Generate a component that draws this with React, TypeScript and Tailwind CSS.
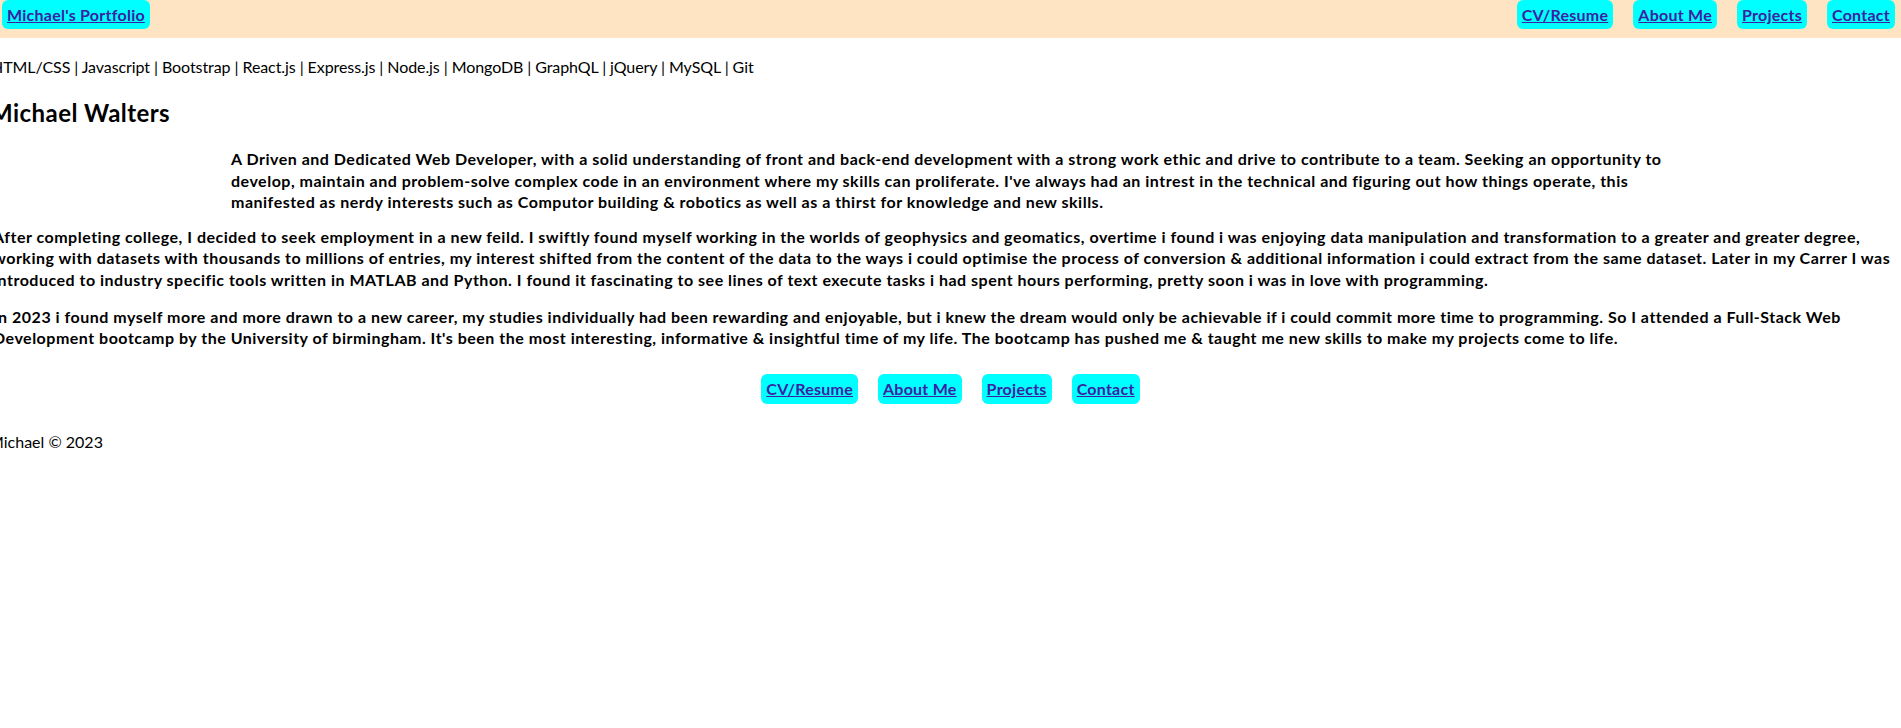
import React from "react";

const navLinks = ["CV/Resume", "About Me", "Projects", "Contact"];

const NavButton = ({ label, tall }: { label: string; tall?: boolean }) => (
    <a
        href="#"
        className={
            "flex items-center rounded-[6px] bg-[#00ffff] px-[5px] font-bold tracking-[0.25px] text-[#3b22a3] underline " +
            (tall ? "h-[30px]" : "h-[29px]")
        }
    >
        {label}
    </a>
);

const App = () => {
    return (
        <div className="w-full min-h-screen overflow-hidden bg-white text-black text-[16px] leading-[21.3px] font-['Lato',sans-serif]">
            {/* Header */}
            <header className="flex h-[38px] items-start justify-between bg-[#ffe4c4] pl-[2px] pr-[6px]">
                <NavButton label="Michael's Portfolio" />
                <nav className="flex gap-[20px]">
                    {navLinks.map((l) => (
                        <NavButton key={l} label={l} />
                    ))}
                </nav>
            </header>

            {/* Skills */}
            <p className="mt-[18px] -ml-[9px] tracking-[-0.08px]">
                HTML/CSS | Javascript | Bootstrap | React.js | Express.js | Node.js | MongoDB | GraphQL | jQuery | MySQL | Git
            </p>

            {/* About */}
            <main className="font-bold tracking-[0.5px]">
                <h2 className="mt-[20px] -ml-[10px] text-[24px] leading-[32px] tracking-[0.45px]">Michael Walters</h2>
                <p className="mt-[19px] ml-[231px] w-[1450px]">
                    A Driven and Dedicated Web Developer, with a solid understanding of front and back-end development with a strong work ethic and drive to contribute to a team. Seeking an opportunity to develop, maintain and problem-solve complex code in an environment where my skills can proliferate. I've always had an intrest in the technical and figuring out how things operate, this manifested as nerdy interests such as Computor building &amp; robotics as well as a thirst for knowledge and new skills.
                </p>
                <p className="mt-[14px] -ml-[7px] w-[1905px]">
                    After completing college, I decided to seek employment in a new feild. I swiftly found myself working in the worlds of geophysics and geomatics, overtime i found i was enjoying data manipulation and transformation to a greater and greater degree, working with datasets with thousands to millions of entries, my interest shifted from the content of the data to the ways i could optimise the process of conversion &amp; additional information i could extract from the same dataset. Later in my Carrer I was introduced to industry specific tools written in MATLAB and Python. I found it fascinating to see lines of text execute tasks i had spent hours performing, pretty soon i was in love with programming.
                </p>
                <p className="mt-[16px] -ml-[7px] w-[1905px]">
                    In 2023 i found myself more and more drawn to a new career, my studies individually had been rewarding and enjoyable, but i knew the dream would only be achievable if i could commit more time to programming. So I attended a Full-Stack Web Development bootcamp by the University of birmingham. It's been the most interesting, informative &amp; insightful time of my life. The bootcamp has pushed me &amp; taught me new skills to make my projects come to life.
                </p>
            </main>

            {/* Footer */}
            <footer>
                <nav className="mt-[25px] flex justify-center gap-[20px]">
                    {navLinks.map((l) => (
                        <NavButton key={l} label={l} tall />
                    ))}
                </nav>
                <p className="mt-[27px] -ml-[11px]">Michael © 2023</p>
            </footer>
        </div>
    );
};

export default App;
